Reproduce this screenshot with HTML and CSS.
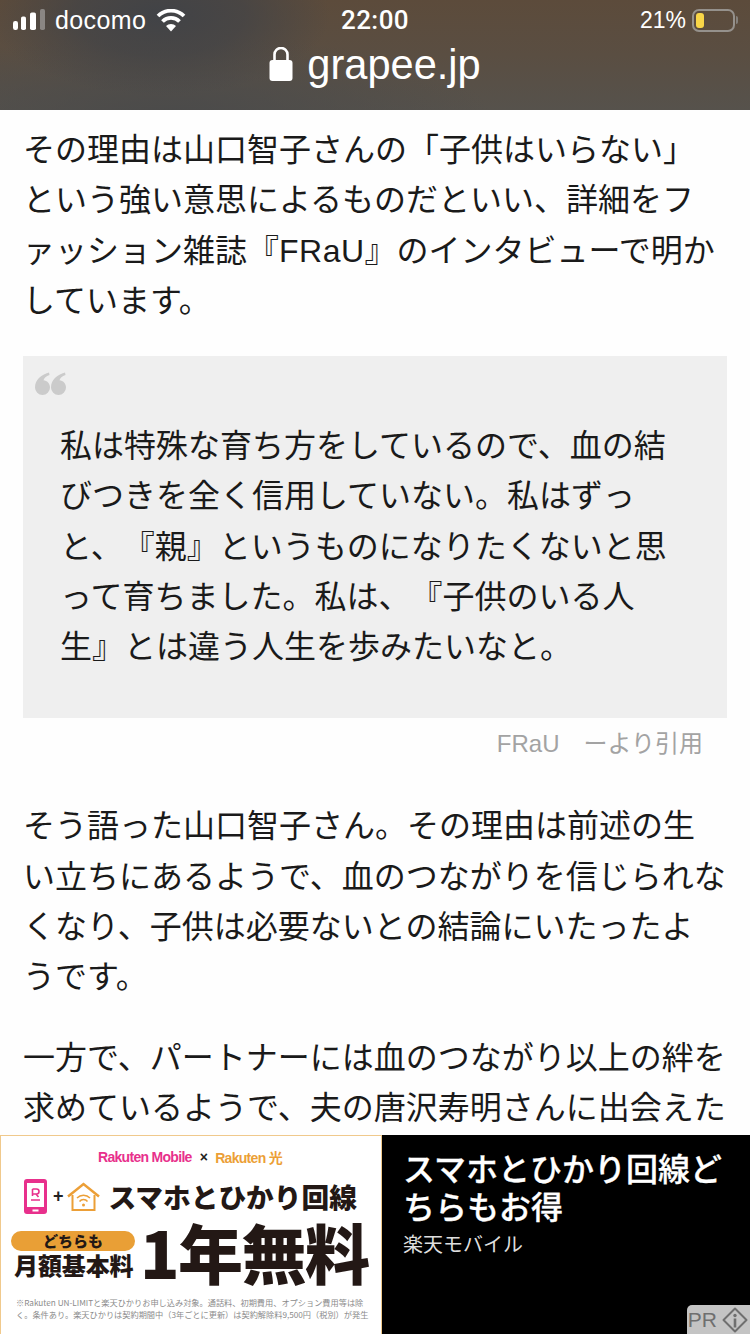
FILE: index.html
```html
<!DOCTYPE html>
<html lang="ja">
<head>
<meta charset="utf-8">
<title>grapee.jp</title>
<link rel="stylesheet" href="styles.css">
</head>
<body>
<div class="page">
  <header class="chrome">
    <div class="status">
      <div class="status-left">
        <svg class="signal" width="34" height="24" viewBox="0 0 34 24"><rect x="1" y="13" width="5" height="9" rx="2.200" fill="#fff"/><rect x="9" y="8.500" width="5" height="13.500" rx="1.800" fill="#fff"/><rect x="18" y="4.500" width="6" height="17.500" rx="1.800" fill="#fff"/><rect x="28" y="1" width="5" height="21" rx="1.800" fill="#8a8683"/></svg>
        <span class="carrier">docomo</span>
        <svg class="wifi" width="30" height="23" viewBox="0 0 30 23"><path d="M15 22.500l-5-5.500a7 7 0 0 1 10 0z" fill="#fff"/><path d="M6.500 12.500a12 12 0 0 1 17 0M2 7a18.500 18.500 0 0 1 26 0" fill="none" stroke="#fff" stroke-width="3.800"/></svg>
      </div>
      <div class="time">22:00</div>
      <div class="status-right">
        <span class="pct">21%</span>
        <span class="battery"><span class="battery-fill"></span></span>
        <span class="battery-tip"></span>
      </div>
    </div>
    <div class="url">
      <svg class="lock" width="24" height="34" viewBox="0 0 24 34"><rect x="0.500" y="13" width="23" height="21" rx="3" fill="#fff"/><path d="M5.500 14V7.500a6.500 6.500 0 0 1 13 0V14" fill="none" stroke="#fff" stroke-width="2.600"/></svg>
      <span class="domain">grapee.jp</span>
    </div>
  </header>

  <main class="article">
    <p class="para first">その理由は山口智子さんの「子供はいらない」<br>という強い意思によるものだといい、詳細をフ<br>ァッション雑誌『<span class="latin">FRaU</span>』のインタビューで明か<br>しています。</p>
    <blockquote class="quote">
      <svg class="quote-mark" width="31" height="23" viewBox="0 0 31 23"><path d="M14 .5C6 2.500 0 8 0 15.500a7.500 7.500 0 0 0 15 0c0-4-3-7-6.500-7.200C9 6 11 4 14.500 3zM30 .5C22 2.500 16 8 16 15.500a7.500 7.500 0 0 0 15 0c0-4-3-7-6.500-7.200C25 6 27 4 30.500 3z" fill="#cbcbcb"/></svg>
      <p class="quote-text">私は特殊な育ち方をしているので、血の結<br>びつきを全く信用していない。私はずっ<br>と、『親』というものになりたくないと思<br>って育ちました。私は、『子供のいる人<br>生』とは違う人生を歩みたいなと。</p>
    </blockquote>
    <p class="cite">FRaU　ーより引用</p>
    <p class="para">そう語った山口智子さん。その理由は前述の生<br>い立ちにあるようで、血のつながりを信じられな<br>くなり、子供は必要ないとの結論にいたったよ<br>うです。</p>
    <p class="para">一方で、パートナーには血のつながり以上の絆を<br>求めているようで、夫の唐沢寿明さんに出会えた</p>
  </main>

  <aside class="ad">
    <div class="banner">
      <div class="brands"><span class="brand-pink">Rakuten Mobile</span><span class="brand-x">×</span><span class="brand-orange">Rakuten 光</span></div>
      <div class="headline">
        <svg width="23" height="35" viewBox="0 0 23 35" class="phone"><rect x="0" y="0" width="23" height="35" rx="3" fill="#e8308c"/><rect x="3" y="4" width="17" height="24" fill="#fff"/><rect x="8.500" y="30.500" width="6" height="2" fill="#fff"/><path d="M8.500 10h4a2.500 2.500 0 0 1 0 5h-4M8.500 10v7M12 15l2.500 3M7 21h9" fill="none" stroke="#e8308c" stroke-width="1.600"/></svg>
        <span class="plus">+</span>
        <svg class="house" width="33" height="29" viewBox="0 0 33 29"><path d="M1 14.500L16.500 2L32 14.500" fill="none" stroke="#ec9f37" stroke-width="2.500"/><path d="M5.500 13v15h22V13" fill="none" stroke="#ec9f37" stroke-width="2"/><path d="M10 16a9 9 0 0 1 13 0M12.500 19.500a5 5 0 0 1 8 0" fill="none" stroke="#ec9f37" stroke-width="1.500"/><circle cx="16.500" cy="23" r="1.500" fill="#ec9f37"/></svg>
        <span class="headline-text">スマホとひかり回線</span>
      </div>
      <div class="offer">
        <div class="offer-left">
          <div class="pill">どちらも</div>
          <div class="fee">月額基本料</div>
        </div>
        <div class="free">1年無料</div>
      </div>
      <p class="fine">※Rakuten UN-LIMITと楽天ひかりお申し込み対象。通話料、初期費用、オプション費用等は除<br>く。条件あり。楽天ひかりは契約期間中（3年ごとに更新）は契約解除料9,500円（税別）が発生</p>
    </div>
    <div class="ad-side">
      <div class="ad-title">スマホとひかり回線ど<br>ちらもお得</div>
      <div class="ad-source">楽天モバイル</div>
      <div class="pr">
        <span class="pr-text">PR</span>
        <svg width="26" height="26" viewBox="0 0 26 26"><path d="M13 1.500L24.500 13L13 24.500L1.500 13Z" fill="none" stroke="#6f6f6f" stroke-width="2" stroke-linejoin="round"/><circle cx="13" cy="8.500" r="1.700" fill="#6f6f6f"/><rect x="11.700" y="11.500" width="2.600" height="9" fill="#6f6f6f"/></svg>
      </div>
    </div>
  </aside>
</div>
</body>
</html>
```
FILE: styles.css
```css
* { box-sizing: border-box; }
html, body { margin: 0; padding: 0; }
body {
  width: 750px;
  height: 1334px;
  overflow: hidden;
  background: #fefefe;
  font-family: "Liberation Sans", "Noto Sans CJK JP", sans-serif;
  color: #1a1a1a;
  text-spacing-trim: space-all;
}
.page { width: 750px; height: 1334px; display: flex; flex-direction: column; overflow: hidden; }

.chrome {
  flex: 0 0 110px;
  height: 110px;
  color: #fff;
  font-family: "Liberation Sans", Arial, sans-serif;
  background:
    radial-gradient(ellipse 170px 80px at 160px 15px, #414347 0%, rgba(65,67,71,.7) 50%, rgba(65,67,71,0) 100%),
    radial-gradient(ellipse 320px 80px at 170px 115px, rgba(74,74,74,.95) 0%, rgba(74,74,74,0) 100%),
    linear-gradient(180deg, #5c4b3b 0%, #5a4e42 50%, #56524c 100%),
    #5a4c3d;
}
.status { display: grid; grid-template-columns: 1fr auto 1fr; align-items: center; height: 40px; padding: 0 12px 0 12px; }
.status-left { display: flex; align-items: center; }
.signal { display: block; }
.carrier { font-size: 25px; margin-left: 9px; letter-spacing: .4px; }
.wifi { margin-left: 10px; display: block; }
.time { font-family: Roboto, "Liberation Sans", sans-serif; font-size: 26px; font-weight: 500; letter-spacing: .4px; }
.status-right { display: flex; align-items: center; justify-content: flex-end; }
.pct { font-size: 23px; margin-right: 6px; }
.battery { width: 43px; height: 23px; border: 2px solid #95918c; border-radius: 7px; padding: 2px; display: block; }
.battery-fill { display: block; width: 8px; height: 100%; border-radius: 3px; background: #f9d648; }
.battery-tip { width: 2px; height: 8px; margin-left: 1px; background: #85817c; border-radius: 0 2px 2px 0; }
.url { display: flex; justify-content: center; align-items: center; height: 48px; margin-top: 1px; }
.lock { display: block; margin-right: 14px; margin-top: -3px; }
.domain { font-size: 41.600px; line-height: 48px; }

.article { flex: 1 1 auto; min-height: 0; overflow: hidden; padding: 0 23px; }
.para {
  margin: 0 0 30px;
  font-size: 32px;
  line-height: 50.400px;
  white-space: nowrap;
}
.para.first { margin-top: 15px; margin-bottom: 29.500px; }
.latin { letter-spacing: .5px; }
.quote { margin: 0; background: #efefef; height: 362px; padding: 16px 0 0 12px; }
.quote-mark { display: block; }
.quote-text { margin: 26px 0 0 25px; font-size: 32px; line-height: 50.200px; white-space: nowrap; }
.cite { margin: 0 0 31px; height: 52px; padding-right: 24px; text-align: right; font-size: 24px; line-height: 52px; color: #a3a3a3; }

.ad { flex: 0 0 199px; display: flex; height: 199px; font-family: "Noto Sans CJK JP", sans-serif; }
.banner { flex: 0 0 382px; height: 199px; background: #fff; border: 1px solid #f0c98c; border-bottom: 0; overflow: hidden; }
.brands { display: flex; justify-content: center; align-items: center; gap: 8px; height: 26px; margin-top: 8px; padding-right: 2px; font-family: "Liberation Sans", "Noto Sans CJK JP", sans-serif; font-weight: 700; font-size: 14px; letter-spacing: -.7px; }
.brand-pink { color: #e8308c; }
.brand-orange { color: #ec9f37; }
.brand-x { color: #222; font-size: 14px; }
.headline { display: flex; align-items: center; height: 36px; margin-top: 8px; padding-left: 23px; }
.phone { display: block; }
.plus { font-family: "Liberation Sans", Arial, sans-serif; font-weight: 700; font-size: 18px; margin-left: 6px; color: #222; }
.house { display: block; margin-left: 3px; }
.headline-text { margin-left: 9px; font-size: 27.700px; line-height: 36px; font-weight: 900; color: #231815; white-space: nowrap; }
.offer { display: flex; align-items: flex-start; padding-left: 10px; margin-top: 0; height: 72px; }
.offer-left { flex: 0 0 124px; padding-top: 17px; }
.pill { height: 20px; border-radius: 10px; background: #e99f36; text-align: center; font-size: 15px; line-height: 20px; font-weight: 900; color: #231815; }
.fee { padding-left: 3px; font-size: 24px; line-height: 28px; font-weight: 900; color: #231815; white-space: nowrap; letter-spacing: -.1px; }
.free { margin-left: 5px; margin-top: 4px; font-size: 65px; line-height: 66px; font-weight: 900; color: #231815; white-space: nowrap; letter-spacing: -1.500px; }
.fine { margin: 11px 0 0; padding-left: 15px; font-size: 8.200px; line-height: 11.500px; color: #8b8b8b; white-space: nowrap; }

.ad-side { position: relative; flex: 1 1 auto; background: #000; color: #fff; padding: 13px 0 0 21px; }
.ad-title { font-size: 32px; line-height: 38px; font-weight: 500; -webkit-text-stroke: .3px #fff; white-space: nowrap; }
.ad-source { margin-top: 6px; font-size: 20px; line-height: 28px; color: #dedede; }
.pr { position: absolute; right: 0; bottom: 0; width: 63px; height: 29px; background: #c4c4c4; border-top-left-radius: 5px; display: flex; align-items: center; justify-content: flex-end; gap: 5px; padding-right: 2px; color: #6f6f6f; font-family: "Liberation Sans", Arial, sans-serif; }
.pr-text { font-size: 21px; }
```
